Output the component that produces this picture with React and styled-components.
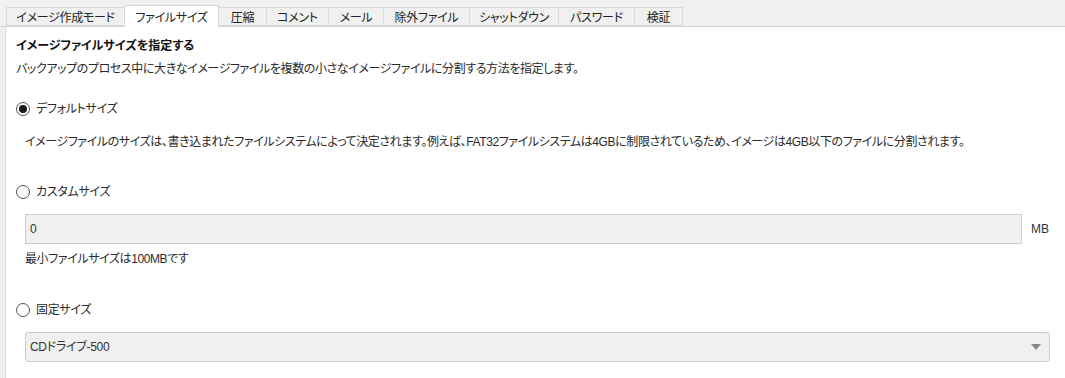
import React, { useState } from 'react';
import styled, { createGlobalStyle } from 'styled-components';

const GlobalStyle = createGlobalStyle`
  html, body {
    margin: 0;
    padding: 0;
    background: #ffffff;
  }
  body {
    font-family: "Liberation Sans", "Noto Sans CJK JP", sans-serif;
    font-size: 12px;
    color: #2a2a2a;
    font-feature-settings: "palt";
  }
`;

const tabs = [
  { label: 'イメージ作成モード', w: 118 },
  { label: 'ファイルサイズ', w: 94 },
  { label: '圧縮', w: 48 },
  { label: 'コメント', w: 62 },
  { label: 'メール', w: 55 },
  { label: '除外ファイル', w: 86 },
  { label: 'シャットダウン', w: 89 },
  { label: 'パスワード', w: 76 },
  { label: '検証', w: 48 },
];

const Page = styled.div`
  width: 1065px;
  height: 378px;
  display: flex;
  flex-direction: column;
  background: #f0f0f0;
  overflow: hidden;
`;

const TabBar = styled.div`
  display: flex;
  align-items: flex-end;
  padding-left: 6px;
  border-bottom: 1px solid #d4d4d4;
  box-sizing: border-box;
  height: 27px;
`;

const Tab = styled.div`
  position: relative;
  display: flex;
  align-items: center;
  justify-content: center;
  box-sizing: border-box;
  width: ${(p) => p.$w + 1}px;
  height: ${(p) => (p.$active ? '22px' : '19px')};
  margin-bottom: ${(p) => (p.$active ? '-1px' : '0')};
  margin-left: -1px;
  background: ${(p) => (p.$active ? '#ffffff' : '#f0f0f0')};
  border: 1px solid #d9d9d9;
  border-bottom: ${(p) => (p.$active ? 'none' : '1px solid #d9d9d9')};
  color: #222;
  letter-spacing: -0.3px;
  white-space: nowrap;
  z-index: ${(p) => (p.$active ? 1 : 0)};
  &:first-child {
    margin-left: 0;
  }
`;

const Body = styled.div`
  flex: 1;
  display: flex;
  margin-left: 5px;
  border-left: 1px solid #dcdcdc;
  background: #ffffff;
`;

const Panel = styled.div`
  flex: 1;
  display: flex;
  flex-direction: column;
  padding: 10px 14px 0 10px;
  line-height: 18px;
`;

const Heading = styled.div`
  font-weight: bold;
  color: #111;
`;

const Text = styled.div`
  margin-top: ${(p) => p.$mt || 0}px;
  padding-left: ${(p) => (p.$indent ? '9px' : '0')};
  letter-spacing: -0.4px;
  white-space: nowrap;
`;

const RadioRow = styled.label`
  display: flex;
  align-items: center;
  gap: 6px;
  margin-top: ${(p) => p.$mt}px;
  height: 18px;
  letter-spacing: -0.3px;
  cursor: pointer;
`;

const Circle = styled.span`
  width: 14px;
  height: 14px;
  box-sizing: border-box;
  border-radius: 50%;
  border: 1px solid #555;
  background: #fff;
  display: flex;
  align-items: center;
  justify-content: center;
  &::after {
    content: '';
    width: 8px;
    height: 8px;
    border-radius: 50%;
    background: ${(p) => (p.$on ? '#1a1a1a' : 'transparent')};
  }
`;

const FieldRow = styled.div`
  display: flex;
  align-items: center;
  gap: 9px;
  margin-top: ${(p) => p.$mt}px;
  padding-left: 9px;
`;

const Input = styled.div`
  flex: 1;
  height: 30px;
  box-sizing: border-box;
  border: 1px solid #cccccc;
  background: #f0f0f0;
  display: flex;
  align-items: center;
  padding-left: 4px;
  color: #333;
`;

const Unit = styled.span`
  width: 20px;
  color: #333;
`;

const Select = styled.div`
  flex: 1;
  height: 30px;
  box-sizing: border-box;
  border: 1px solid #cccccc;
  border-radius: 3px;
  background: #f0f0f0;
  display: flex;
  align-items: center;
  justify-content: space-between;
  padding: 0 8px 0 4px;
  color: #333;
  letter-spacing: -0.3px;
  margin-right: 1px;
`;

const Caret = styled.span`
  width: 0;
  height: 0;
  border-left: 5px solid transparent;
  border-right: 5px solid transparent;
  border-top: 6px solid #8a8a8a;
`;

export default function App() {
  const [mode, setMode] = useState('default');
  return (
    <>
      <GlobalStyle />
      <Page>
        <TabBar>
          {tabs.map((t) => (
            <Tab key={t.label} $w={t.w} $active={t.label === 'ファイルサイズ'}>
              {t.label}
            </Tab>
          ))}
        </TabBar>
        <Body>
          <Panel>
            <Heading>イメージファイルサイズを指定する</Heading>
            <Text $mt={5}>
              バックアップのプロセス中に大きなイメージファイルを複数の小さなイメージファイルに分割する方法を指定します。
            </Text>
            <RadioRow $mt={22} onClick={() => setMode('default')}>
              <Circle $on={mode === 'default'} />
              デフォルトサイズ
            </RadioRow>
            <Text $mt={15} $indent>
              イメージファイルのサイズは、書き込まれたファイルシステムによって決定されます。例えば、FAT32ファイルシステムは4GBに制限されているため、イメージは4GB以下のファイルに分割されます。
            </Text>
            <RadioRow $mt={32} onClick={() => setMode('custom')}>
              <Circle $on={mode === 'custom'} />
              カスタムサイズ
            </RadioRow>
            <FieldRow $mt={13}>
              <Input>0</Input>
              <Unit>MB</Unit>
            </FieldRow>
            <Text $mt={6} $indent>
              最小ファイルサイズは100MBです
            </Text>
            <RadioRow $mt={33} onClick={() => setMode('fixed')}>
              <Circle $on={mode === 'fixed'} />
              固定サイズ
            </RadioRow>
            <FieldRow $mt={13}>
              <Select>
                CDドライブ-500
                <Caret />
              </Select>
            </FieldRow>
          </Panel>
        </Body>
      </Page>
    </>
  );
}
